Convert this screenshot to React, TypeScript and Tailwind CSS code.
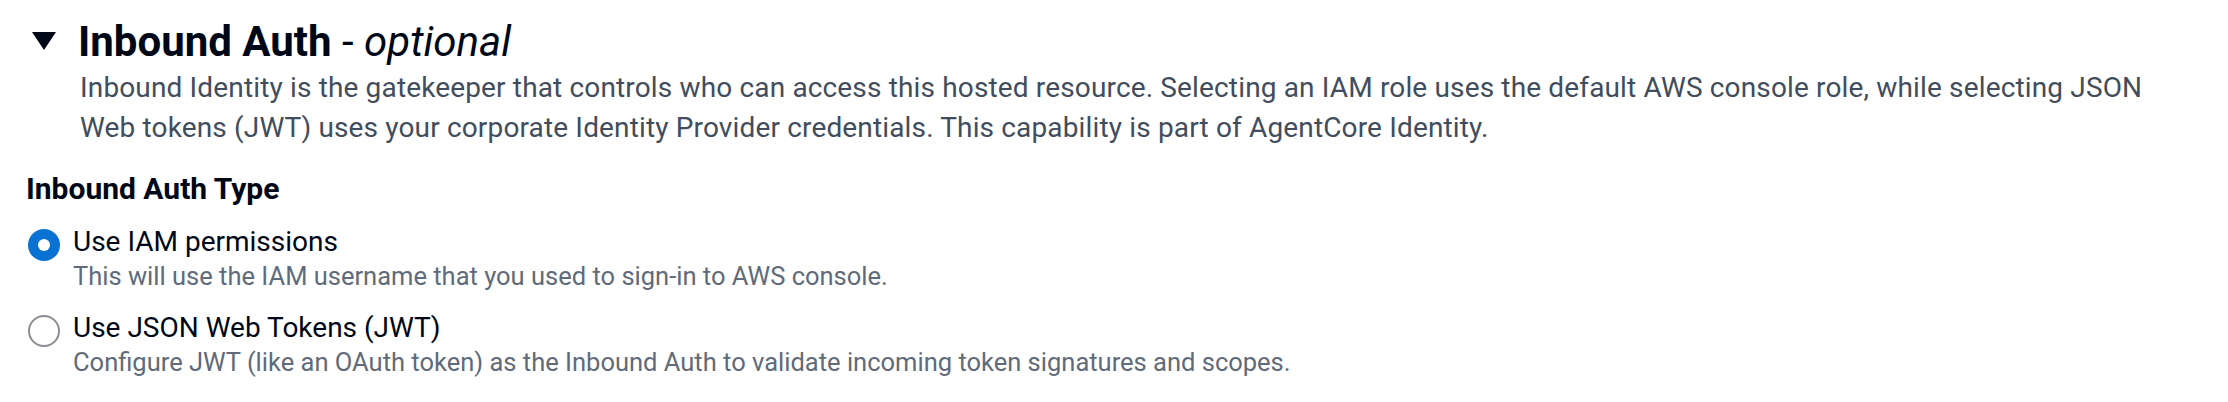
function RadioOption({
  checked,
  label,
  description,
}: {
  checked: boolean;
  label: string;
  description: string;
}) {
  return (
    <div className="flex items-start">
      {/* radio control */}
      <div className="ml-[2px] mt-[5px] w-8 h-8 shrink-0">
        {checked ? (
          <div className="w-8 h-8 rounded-full bg-[#0972d3] flex items-center justify-center">
            <div className="w-3 h-3 rounded-full bg-white"></div>
          </div>
        ) : (
          <div className="w-8 h-8 rounded-full border-[2.5px] border-[#8c8c94] bg-white"></div>
        )}
      </div>
      <div className="flex flex-col ml-[13px]">
        <div className="text-[28px] leading-[36px] text-[#000716]">{label}</div>
        <div className="text-[25.5px] leading-[32px] text-[#5f6b7a]">{description}</div>
      </div>
    </div>
  );
}

export default function App() {
  return (
    <div className="w-[2228px] h-[402px] bg-white pl-[26px] pt-4 font-['Roboto',sans-serif] overflow-hidden">
      {/* expandable section header */}
      <div className="flex items-center h-12">
        <svg width="24" height="18" viewBox="0 0 24 18" className="ml-[6px] mt-[2px] shrink-0">
          <polygon points="0,0 24,0 12,18" fill="#000716" />
        </svg>
        <h2 className="ml-[22px] mt-[4px] text-[42px] leading-[48px] text-[#000716]">
          <span className="font-bold">Inbound Auth</span>
          <span> - </span>
          <span className="italic">optional</span>
        </h2>
      </div>
      <p className="ml-[54px] mt-1 max-w-[2095px] text-[28px] leading-[40px] tracking-[0.15px] text-[#414d5c]">
        Inbound Identity is the gatekeeper that controls who can access this hosted resource. Selecting an IAM role uses the default AWS console role, while selecting JSON Web tokens (JWT) uses your corporate Identity Provider credentials. This capability is part of AgentCore Identity.
      </p>

      {/* auth type radio group */}
      <div className="mt-[21px] text-[30px] leading-[40px] font-bold text-[#000716]">Inbound Auth Type</div>
      <div className="flex flex-col gap-[18px] mt-[15px]">
        <RadioOption
          checked
          label="Use IAM permissions"
          description="This will use the IAM username that you used to sign-in to AWS console."
        />
        <RadioOption
          checked={false}
          label="Use JSON Web Tokens (JWT)"
          description="Configure JWT (like an OAuth token) as the Inbound Auth to validate incoming token signatures and scopes."
        />
      </div>
    </div>
  );
}
